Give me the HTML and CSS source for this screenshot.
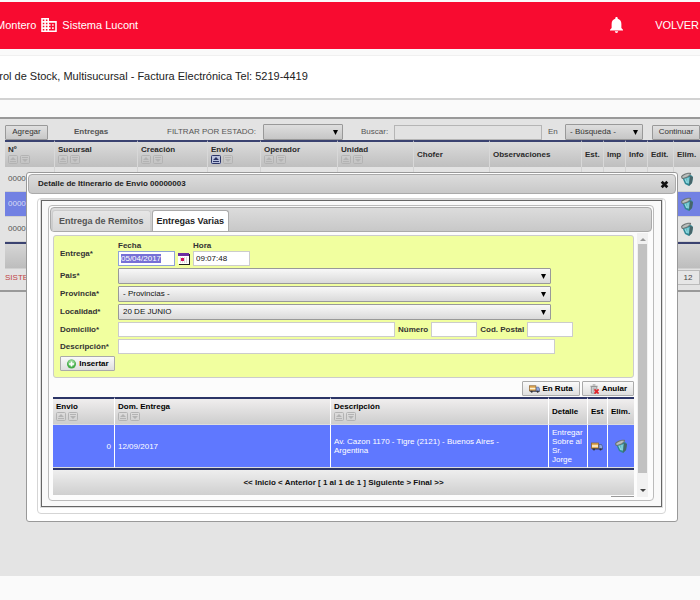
FILE: index.html
```html
<!DOCTYPE html>
<html lang="es">
<head>
    <meta charset="UTF-8">
    <meta name="viewport" content="width=device-width, initial-scale=1.0">
    <title>Sistema Lucont</title>
    <link rel="stylesheet" href="styles.css">
</head>
<body>
    <!-- Icons -->
    <svg class="sprite" aria-hidden="true">
        <symbol id="up" viewBox="0 0 10 9">
            <rect class="box" x=".5" y=".5" width="9" height="8" rx="1"/>
            <path class="mark" d="M5 2l3 3H2zM2 6h6v1H2z"/>
        </symbol>
        <symbol id="down" viewBox="0 0 10 9">
            <rect class="box" x=".5" y=".5" width="9" height="8" rx="1"/>
            <path class="mark" d="M2 2h6v1H2zM2 4h6L5 7z"/>
        </symbol>
        <symbol id="bin" viewBox="0 0 14 14">
            <path d="M2 5l9-2 2 2-1 6-3 3-4-2z" fill="#2f8794"/>
            <path d="M4 6l6-1-1 7-3-1z" fill="#5fb9c4"/>
            <path d="M10 4l3 1-1 6-3 3z" fill="#47666a"/>
            <path d="M5 7l2 4M8 6v5" stroke="#9edde2" stroke-width="1"/>
            <path d="M1 5c0-2 6-5 10-4 1 2-5 6-9 6z" fill="#6d7473"/>
            <path d="M2 5c1-1 5-4 8-3-1 2-4 3-7 4z" fill="#b9bfbd"/>
        </symbol>
        <symbol id="truck" viewBox="0 0 12 9">
            <rect x=".5" y="1" width="7" height="5.500" fill="#e3aa55" stroke="#8b6534" stroke-width=".8"/>
            <path d="M1 4h6" stroke="#fdf3d4" stroke-width="1.600"/>
            <path d="M8 2.500h2.500l1 2v2.500H8z" fill="#8ea6dc" stroke="#46598c" stroke-width=".7"/>
            <path d="M1 7h10.500" stroke="#333a55" stroke-width="1"/>
            <circle cx="3" cy="7.500" r="1" fill="#333"/>
            <circle cx="9.500" cy="7.500" r="1" fill="#333"/>
        </symbol>
    </svg>

    <header class="topbar">
        <div class="brand">
            <span>Montero</span>
            <svg class="company" viewBox="2 3 20 18"><path fill="#fff" d="M12 7V3H2v18h20V7H12zM6 19H4v-2h2v2zm0-4H4v-2h2v2zm0-4H4V9h2v2zm0-4H4V5h2v2zm4 12H8v-2h2v2zm0-4H8v-2h2v2zm0-4H8V9h2v2zm0-4H8V5h2v2zm10 12h-8v-2h2v-2h-2v-2h2v-2h-2V9h8v10zm-2-8h-2v2h2v-2zm0 4h-2v2h2v-2z"/></svg>
            <span>Sistema Lucont</span>
        </div>
        <svg class="bell" viewBox="4 2.500 16 19.500"><path fill="#fff" d="M12 22c1.100 0 2-.900 2-2h-4c0 1.100.900 2 2 2zm6-6v-5c0-3.070-1.640-5.640-4.500-6.320V4c0-.830-.670-1.500-1.500-1.500s-1.500.670-1.500 1.500v.680C7.630 5.360 6 7.920 6 11v5l-2 2v1h16v-1l-2-2z"/></svg>
        <a href="#" class="back">VOLVER</a>
    </header>

    <div class="notice"><p>Control de Stock, Multisucursal - Factura Electrónica Tel: 5219-4419</p></div>

    <main class="workspace">
        <section class="panel">
            <div class="toolbar">
                <button type="button">Agregar</button>
                <b class="title">Entregas</b>
                <label for="estado">FILTRAR POR ESTADO:</label>
                <select id="estado" class="estado"><option></option></select>
                <label for="buscar" class="buscar-label">Buscar:</label>
                <input type="text" id="buscar">
                <label for="campo">En</label>
                <select id="campo" class="campo"><option>- Búsqueda -</option></select>
                <button type="button" class="continuar">Continuar</button>
            </div>
            <table class="grid entregas">
                <colgroup>
                    <col class="c-num"><col class="c-suc"><col class="c-cre"><col class="c-env"><col class="c-ope"><col class="c-uni"><col class="c-uni"><col class="c-obs"><col class="c-ico"><col class="c-ico"><col class="c-ico"><col class="c-edit"><col>
                </colgroup>
                <thead>
                    <tr>
                        <th>Nº<div class="sort"><svg><use href="#up"/></svg><svg><use href="#down"/></svg></div></th>
                        <th>Sucursal<div class="sort"><svg><use href="#up"/></svg><svg><use href="#down"/></svg></div></th>
                        <th>Creación<div class="sort"><svg><use href="#up"/></svg><svg><use href="#down"/></svg></div></th>
                        <th>Envio<div class="sort"><svg class="on"><use href="#up"/></svg><svg><use href="#down"/></svg></div></th>
                        <th>Operador<div class="sort"><svg><use href="#up"/></svg><svg><use href="#down"/></svg></div></th>
                        <th>Unidad<div class="sort"><svg><use href="#up"/></svg><svg><use href="#down"/></svg></div></th>
                        <th>Chofer</th>
                        <th>Observaciones</th>
                        <th>Est.</th>
                        <th>Imp</th>
                        <th>Info</th>
                        <th>Edit.</th>
                        <th>Elim.</th>
                    </tr>
                </thead>
                <tbody>
                    <tr><td>0000</td><td></td><td></td><td></td><td></td><td></td><td></td><td></td><td></td><td></td><td></td><td></td><td><svg class="bin"><use href="#bin"/></svg></td></tr>
                    <tr class="selected"><td>0000</td><td></td><td></td><td></td><td></td><td></td><td></td><td></td><td></td><td></td><td></td><td></td><td><svg class="bin"><use href="#bin"/></svg></td></tr>
                    <tr><td>0000</td><td></td><td></td><td></td><td></td><td></td><td></td><td></td><td></td><td></td><td></td><td></td><td><svg class="bin"><use href="#bin"/></svg></td></tr>
                </tbody>
                <tfoot>
                    <tr><td colspan="13"></td></tr>
                </tfoot>
            </table>
            <div class="status">
                <span>SISTEMA</span>
                <input type="text" value="12" aria-label="Filas">
            </div>
        </section>

        <!-- Detalle -->
        <div class="dialog" role="dialog" aria-labelledby="dialogTitle">
            <div class="dialog-title">
                <span id="dialogTitle">Detalle de Itinerario de Envio 00000003</span>
                <button type="button" class="close" aria-label="Cerrar"><svg viewBox="0 0 8 8"><path d="M1.500 1.500l5 5M6.500 1.500l-5 5" stroke="#111" stroke-width="2.400"/></svg></button>
            </div>
            <div class="dialog-content">
                <div class="frame">
                    <div class="tabs">
                        <nav class="tab-nav">
                            <a href="#" class="tab">Entrega de Remitos</a>
                            <a href="#" class="tab active">Entregas Varias</a>
                        </nav>
                        <div class="scroll">
                            <div class="pane">
                                <form class="entrega-form">
                                    <label for="fecha">Entrega*</label>
                                    <div class="row dates">
                                        <div class="field">
                                            <label for="fecha">Fecha</label>
                                            <input type="text" id="fecha" value="05/04/2017">
                                        </div>
                                        <svg class="calendar" viewBox="0 0 12 12"><rect width="11" height="11" fill="#fff"/><path d="M0 0h11v3H0z" fill="#6b2fa0"/><path d="M11 1h1v11H1v-1h10z" fill="#222"/><path d="M2 5h8M2 7h8M2 9h8" stroke="#bbb" stroke-width="1" stroke-dasharray="1 1"/><path d="M3 5h3v3H3z" fill="#d4145a"/></svg>
                                        <div class="field">
                                            <label for="hora">Hora</label>
                                            <input type="text" id="hora" value="09:07:48">
                                        </div>
                                    </div>
                                    <label for="pais">Pais*</label>
                                    <select id="pais"><option></option></select>
                                    <label for="provincia">Provincia*</label>
                                    <select id="provincia"><option>- Provincias -</option></select>
                                    <label for="localidad">Localidad*</label>
                                    <select id="localidad"><option>20 DE JUNIO</option></select>
                                    <label for="domicilio">Domicilio*</label>
                                    <div class="row">
                                        <input type="text" id="domicilio">
                                        <label for="numero">Número</label>
                                        <input type="text" id="numero">
                                        <label for="postal">Cod. Postal</label>
                                        <input type="text" id="postal">
                                    </div>
                                    <label for="descripcion">Descripción*</label>
                                    <input type="text" id="descripcion">
                                    <button type="button" class="insertar"><svg viewBox="0 0 10 10"><circle cx="5" cy="5" r="4.500" fill="#45ad48"/><circle cx="5" cy="4" r="3.300" fill="#8bd28b"/><path d="M5 2.500v5M2.500 5h5" stroke="#fff" stroke-width="1.600"/></svg>Insertar</button>
                                </form>
                                <div class="actions">
                                    <button type="button"><svg class="truck"><use href="#truck"/></svg>En Ruta</button>
                                    <button type="button"><svg viewBox="0 0 11 11"><path d="M2 3h6v7H2z" fill="#e8ecef" stroke="#777" stroke-width=".8"/><path d="M1 2.500h8M3.500 1h3M4 4v5M6 4v5" stroke="#888" stroke-width=".9"/><path d="M5.500 6l4.500 4.500M10 6l-4.500 4.500" stroke="#e3242b" stroke-width="1.900"/></svg>Anular</button>
                                </div>
                                <table class="grid detalle">
                                    <colgroup>
                                        <col class="d-env"><col class="d-dom"><col><col class="d-det"><col class="d-est"><col class="d-eli">
                                    </colgroup>
                                    <thead>
                                        <tr>
                                            <th>Envio<div class="sort"><svg><use href="#up"/></svg><svg><use href="#down"/></svg></div></th>
                                            <th>Dom. Entrega<div class="sort"><svg><use href="#up"/></svg><svg><use href="#down"/></svg></div></th>
                                            <th>Descripción<div class="sort"><svg><use href="#up"/></svg><svg><use href="#down"/></svg></div></th>
                                            <th>Detalle</th>
                                            <th>Est</th>
                                            <th>Elim.</th>
                                        </tr>
                                    </thead>
                                    <tbody>
                                        <tr class="selected">
                                            <td class="number">0</td>
                                            <td>12/09/2017</td>
                                            <td>Av. Cazon 1170 - Tigre (2121) - Buenos Aires -<br>Argentina</td>
                                            <td>Entregar<br>Sobre al<br>Sr.<br>Jorge</td>
                                            <td><svg class="truck"><use href="#truck"/></svg></td>
                                            <td><svg class="bin"><use href="#bin"/></svg></td>
                                        </tr>
                                    </tbody>
                                    <tfoot>
                                        <tr><td colspan="6">&lt;&lt; Inicio &lt; Anterior [ 1 al 1 de 1 ] Siguiente &gt; Final &gt;&gt;</td></tr>
                                    </tfoot>
                                </table>
                                <div class="more"></div>
                            </div>
                            <div class="scrollbar">
                                <i class="arrow-up"></i>
                                <i class="thumb"></i>
                                <i class="arrow-down"></i>
                            </div>
                        </div>
                    </div>
                </div>
            </div>
        </div>
    </main>

    <script src="script.js"></script>
</body>
</html>
```
FILE: styles.css
```css
* {
    box-sizing: border-box;
}
body {
    margin: 0;
    padding-top: 2px;
    background: #fafafa;
    color: #333;
    font-family: "Liberation Sans", Arial, sans-serif;
    font-size: 8px;
    line-height: 10px;
    overflow: hidden;
}
.sprite {
    position: absolute;
    width: 0;
    height: 0;
}
svg {
    display: block;
    flex: none;
}
input, select, button {
    font: inherit;
    margin: 0;
}
.topbar {
    display: flex;
    align-items: center;
    height: 47px;
    padding: 0 1px 2px 0;
    background: #f80b30;
    color: #fff;
    font-size: 11px;
    line-height: 14px;
}
.brand {
    display: flex;
    align-items: center;
    gap: 5px;
    flex: 1;
    margin-left: -4px;
    white-space: nowrap;
}
.company {
    width: 16px;
    height: 14px;
}
.bell {
    width: 13px;
    height: 16px;
}
.back {
    margin-left: 32px;
    color: #fff;
    text-decoration: none;
}
.notice {
    margin-top: 6px;
    padding: 13px 0;
    height: 45px;
    background: #fff;
    border-top: 1px solid #f0f0f0;
    border-bottom: 2px solid #d2d2d2;
    color: #222;
    font-size: 11px;
    line-height: 14px;
}
.notice p {
    margin: 0;
    text-indent: -24px;
    white-space: nowrap;
}
.workspace {
    position: relative;
    height: 459px;
    margin-top: 17px;
    background: #e4e4e4;
}
.panel {
    padding: 5px 0 5px 5px;
    border-top: 2px solid #999;
    border-bottom: 2px solid #999;
    background: #e3e3e3;
}

/* toolbar */
.toolbar {
    display: flex;
    align-items: center;
    height: 16px;
    color: #555;
    white-space: nowrap;
}
button {
    display: inline-flex;
    align-items: center;
    justify-content: center;
    gap: 2px;
    height: 15px;
    padding: 0 6px;
    border: 1px solid #aaa;
    border-radius: 1px;
    background: linear-gradient(#fafafa, #dedede);
    color: #000;
    font-weight: bold;
    white-space: nowrap;
}
select {
    height: 16px;
    padding: 0 4px;
    border: 1px solid #999;
    border-radius: 1px;
    color: #111;
    appearance: none;
    background: url('data:image/svg+xml,<svg xmlns="http://www.w3.org/2000/svg" viewBox="0 0 6 6"><path d="M0 0h6L3 6z"/></svg>') right 4px center / 5px 5px no-repeat, linear-gradient(#f8f8f8, #dadada);
}
input[type="text"] {
    height: 15px;
    min-width: 0;
    padding: 0 2px;
    border: 1px solid #ccc;
    background: #fff;
    color: #111;
}
.toolbar button {
    width: 43px;
    padding: 0;
    border-color: #999;
    background: linear-gradient(#e0e0e0, #c8c8c8);
    color: #333;
    font-weight: normal;
}
.toolbar select {
    background-image: url('data:image/svg+xml,<svg xmlns="http://www.w3.org/2000/svg" viewBox="0 0 6 6"><path d="M0 0h6L3 6z"/></svg>'), linear-gradient(#dedede, #c6c6c6);
    color: #333;
}
.toolbar .title {
    width: 119px;
    padding-left: 26px;
}
.toolbar label[for="estado"] {
    width: 96px;
}
.toolbar .estado {
    width: 80px;
}
.toolbar .buscar-label {
    width: 51px;
    padding-left: 18px;
}
.toolbar input {
    flex: 1;
    background: #e2e2e2;
    border-color: #b5b5b5;
}
.toolbar label[for="campo"] {
    width: 23px;
    padding-left: 6px;
}
.toolbar .campo {
    width: 78px;
}
.toolbar .continuar {
    width: 48px;
    margin-left: 9px;
}

/* tables */
.grid {
    width: 100%;
    table-layout: fixed;
    border-collapse: separate;
    border-spacing: 0;
}
.grid th {
    height: 27px;
    padding: 0 3px;
    border-top: 2px solid #2c3567;
    border-right: 1px solid #fff;
    background: linear-gradient(#f0eeee, #cdcdcd);
    color: #000;
    text-align: left;
    white-space: nowrap;
}
.grid td {
    padding: 0 3px;
    border-right: 1px solid #fff;
}
.grid th:last-child,
.grid td:last-child {
    border-right: 0;
}
.grid tfoot td {
    height: 27px;
    border-top: 2px solid #2c3567;
    background: linear-gradient(#eee, #cfcfcf);
    color: #111;
    text-align: center;
    font-weight: bold;
}
.sort {
    display: flex;
    gap: 2px;
}
.sort svg {
    width: 10px;
    height: 9px;
    color: #b3b3b3;
}
.box {
    fill: none;
    stroke: currentColor;
}
.mark {
    fill: currentColor;
}
.sort .on {
    background: #b9c1dc;
    color: #2c3567;
}
.bin {
    width: 14px;
    height: 14px;
    margin: 0 auto;
}
.truck {
    width: 12px;
    height: 9px;
}
.entregas th {
    background: linear-gradient(#dbdbdb, #bfbfbf);
    border-color: #3a4270 #d8d8d8 #d8d8d8;
    color: #2a2a2a;
}
.entregas td {
    height: 25px;
    border-right-color: #d3d3d3;
    border-bottom: 1px solid #d0d0d0;
    color: #555;
}
.entregas .selected td {
    background: #7281e3;
    color: #d9dcf5;
}
.entregas tfoot td {
    border-top-color: #3a4270;
    background: linear-gradient(#d6d6d6, #bdbdbd);
}
.c-num { width: 50px; }
.c-suc { width: 83px; }
.c-cre { width: 70px; }
.c-env { width: 53px; }
.c-ope { width: 77px; }
.c-uni { width: 76px; }
.c-obs { width: 92px; }
.c-ico { width: 22px; }
.c-edit { width: 26px; }
.status {
    display: flex;
    justify-content: space-between;
    align-items: center;
    padding-top: 1px;
    color: #c04545;
}
.status input[type="text"] {
    width: 24px;
    border-color: #bbb;
    background: #e6e6e6;
    color: #444;
    text-align: center;
}

/* dialog */
.dialog {
    position: absolute;
    top: 55px;
    left: 26px;
    right: 22px;
    padding: 1px;
    border: 1px solid #999;
    border-radius: 3px;
    background: #fff;
}
.dialog-title {
    display: flex;
    align-items: center;
    justify-content: space-between;
    height: 20px;
    padding: 0 6px 0 9px;
    border: 1px solid #aaa;
    border-radius: 4px;
    background: linear-gradient(#dcdcdc, #c8c8c8);
    color: #222;
    font-weight: bold;
}
.dialog .close {
    width: 10px;
    height: 10px;
    padding: 0;
    border: 0;
    background: none;
}
.close svg {
    width: 9px;
    height: 9px;
}
.dialog-content {
    margin: 4px 10px 6px 9px;
    padding: 1px 3px 6px;
    border: 1px solid #d5d5d5;
    border-radius: 4px;
}
.frame {
    padding: 4px 7px 5px 6px;
    border: 1px solid #666;
    background: #f9f9f9;
    box-shadow: 0 0 0 1px #ddd;
}
.tabs {
    padding: 1px 1px 3px;
    border: 1px solid #bbb;
    border-radius: 4px;
    background: #fcfcfc;
}
.tab-nav {
    display: flex;
    gap: 1px;
    height: 25px;
    padding: 2px 0 0 1px;
    border: 1px solid #aaa;
    border-radius: 4px;
    background: linear-gradient(#dcdcdc, #c8c8c8);
}
.tab {
    padding: 4px 6px;
    border: 1px solid #ccc;
    border-bottom: 0;
    border-radius: 3px 3px 0 0;
    background: linear-gradient(#e6e6e6, #d8d8d8);
    color: #555;
    font-size: 9px;
    font-weight: bold;
    line-height: 12px;
    text-decoration: none;
}
.tab.active {
    padding: 4px;
    border-color: #aaa;
    background: #fff;
    color: #222;
}
.scroll {
    display: flex;
    height: 264px;
    padding-left: 3px;
    gap: 3px;
    margin-top: 1px;
    overflow: hidden;
}
.pane {
    flex: 1;
    padding-top: 2px;
}
.scrollbar {
    display: flex;
    flex-direction: column;
    align-items: center;
    justify-content: space-between;
    width: 11px;
    margin-right: 4px;
    padding: 5px 0;
    background: #f1f1f1;
}
.thumb {
    width: 9px;
    height: 229px;
    margin-bottom: 14px;
    background: #c1c1c1;
}
.arrow-up, .arrow-down {
    border: 3px solid transparent;
}
.arrow-up {
    border-top: 0;
    border-bottom-color: #999;
}
.arrow-down {
    border-bottom: 0;
    border-top-color: #444;
}

/* entrega form */
.entrega-form {
    display: grid;
    grid-template-columns: 58px 1fr;
    align-items: center;
    row-gap: 2px;
    padding: 5px 6px 6px;
    border: 1px solid #ccc;
    border-radius: 3px;
    background: #f1ff9f;
    color: #333;
    font-weight: bold;
}
.entrega-form input,
.entrega-form select {
    font-weight: normal;
}
.row {
    display: flex;
    align-items: center;
    gap: 3px;
}
.dates {
    align-items: flex-end;
}
.field {
    display: flex;
    flex-direction: column;
    width: 57px;
}
#fecha {
    border-color: #8fa3d8;
    outline: 1px solid #8fa3d8;
    outline-offset: -1px;
}
#fecha::selection {
    background: #7670d6;
    color: #fff;
}
.calendar {
    width: 12px;
    height: 12px;
    margin-bottom: 1px;
}
.entrega-form select {
    width: 433px;
}
#domicilio {
    width: 277px;
}
#numero, #postal {
    width: 46px;
}
#descripcion {
    width: 437px;
}
.insertar {
    width: 55px;
}
.insertar svg,
.actions svg {
    width: 11px;
    height: 10px;
}
.entrega-form .insertar {
    padding: 0;
}
.actions {
    display: flex;
    justify-content: flex-end;
    gap: 2px;
    padding: 3px 0 1px;
}
.actions button {
    padding: 0 6px;
}
.detalle .selected td {
    height: 44px;
    background: #5f78ff;
    color: #fff;
    line-height: 9px;
    border-top: 1px solid #ddd;
    border-bottom: 1px solid #ddd;
}
.detalle .number {
    text-align: right;
}
.d-env { width: 62px; }
.d-dom { width: 216px; }
.d-det { width: 39px; }
.d-est { width: 20px; }
.d-eli { width: 26px; }
.more {
    width: 23px;
    height: 15px;
    margin: 1px 0 0 auto;
    border: 1px solid #999;
}
```
FILE: script.js
```js
const fecha = document.getElementById('fecha');
fecha.focus();
fecha.select();
```
